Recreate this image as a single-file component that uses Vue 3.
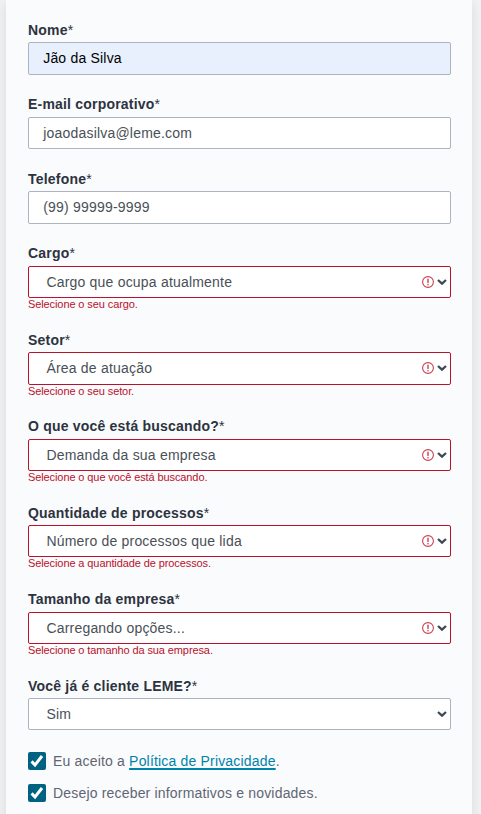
<script setup>
const fields = [
  { label: 'Nome', value: 'Jão da Silva', filled: true },
  { label: 'E-mail corporativo', value: 'joaodasilva@leme.com' },
  { label: 'Telefone', value: '(99) 99999-9999' },
  { label: 'Cargo', value: 'Cargo que ocupa atualmente', select: true, error: 'Selecione o seu cargo.' },
  { label: 'Setor', value: 'Área de atuação', select: true, error: 'Selecione o seu setor.' },
  { label: 'O que você está buscando?', value: 'Demanda da sua empresa', select: true, error: 'Selecione o que você está buscando.' },
  { label: 'Quantidade de processos', value: 'Número de processos que lida', select: true, error: 'Selecione a quantidade de processos.' },
  { label: 'Tamanho da empresa', value: 'Carregando opções...', select: true, error: 'Selecione o tamanho da sua empresa.' },
  { label: 'Você já é cliente LEME?', value: 'Sim', select: true },
]
</script>

<template>
  <main class="page">
    <form class="card">
      <div v-for="f in fields" :key="f.label" class="field" :class="{ invalid: f.error }">
        <div class="label"><span class="name">{{ f.label }}</span><span>*</span></div>
        <div class="control" :class="{ filled: f.filled, select: f.select }">
          <span class="value">{{ f.value }}</span>
          <svg v-if="f.error" class="alert" viewBox="0 0 12 12">
            <circle cx="6" cy="6" r="5.4" fill="none" stroke="#cc4052" stroke-width="1.1" />
            <path d="M6 3.1v3.4" stroke="#cc4052" stroke-width="1.4" stroke-linecap="round" />
            <circle cx="6" cy="8.7" r=".8" fill="#cc4052" />
          </svg>
          <svg v-if="f.select" class="chevron" viewBox="0 0 10 6">
            <path d="M1 1l4 3.7L9 1" fill="none" stroke="#3f4a56" stroke-width="2.3" />
          </svg>
        </div>
        <div v-if="f.error" class="error">{{ f.error }}</div>
      </div>
      <div class="checks">
        <div class="check">
          <span class="box"><svg viewBox="0 0 18 18"><path d="M3.6 9.4l3.4 3.6L14 4" fill="none" stroke="#fff" stroke-width="3" /></svg></span>
          <span>Eu aceito a <a class="link">Política de Privacidade</a>.</span>
        </div>
        <div class="check">
          <span class="box"><svg viewBox="0 0 18 18"><path d="M3.6 9.4l3.4 3.6L14 4" fill="none" stroke="#fff" stroke-width="3" /></svg></span>
          <span>Desejo receber informativos e novidades.</span>
        </div>
      </div>
    </form>
  </main>
</template>

<style>
body {
  background: #f4f5f6;
}
</style>

<style scoped>
.page {
  height: 814px;
  padding: 0 9px 0 6px;
  overflow: hidden;
  box-sizing: border-box;
  font-family: "Liberation Sans", Arial, sans-serif;
  font-size: 14px;
}
.card {
  height: 850px;
  box-sizing: border-box;
  padding: 19.95px 21px 0 22px;
  background: #fafbfd;
  box-shadow: 0 0 16px rgba(0, 0, 0, 0.12);
}
.field {
  height: 74.5px;
}
.field.invalid {
  height: 86.47px;
}
.label {
  height: 22.25px;
  line-height: 20px;
  color: #2d3340;
  letter-spacing: 0.2px;
  white-space: nowrap;
}
.name {
  font-weight: 700;
}
.control {
  display: flex;
  align-items: center;
  box-sizing: border-box;
  height: 32.35px;
  padding: 0 3px 0 14.2px;
  border: 1px solid #acb4c0;
  border-radius: 2px;
  background: #fff;
  color: #495057;
}
.control.select {
  padding-left: 17.4px;
}
.control.filled {
  background: #e8f0fe;
  color: #000;
}
.invalid .control {
  border-color: #b9122b;
}
.value {
  flex: 1;
  line-height: 20px;
  letter-spacing: 0.2px;
}
.alert {
  width: 12px;
  height: 12px;
  margin-right: 3px;
}
.chevron {
  width: 10px;
  height: 6px;
}
.error {
  line-height: 12px;
  font-size: 11px;
  letter-spacing: -0.1px;
  color: #b9122b;
}
.checks {
  padding-top: 1px;
  margin-top: -6px;
}
.check {
  display: flex;
  align-items: center;
  height: 32px;
  color: #5f6673;
  letter-spacing: 0.18px;
}
.box {
  width: 18px;
  height: 18px;
  margin-right: 7px;
  border-radius: 2px;
  background: #006283;
}
.box svg {
  display: block;
}
.link {
  color: #0083ab;
  text-decoration: underline 2px;
  text-decoration-skip-ink: none;
  text-underline-offset: 2px;
}
</style>
